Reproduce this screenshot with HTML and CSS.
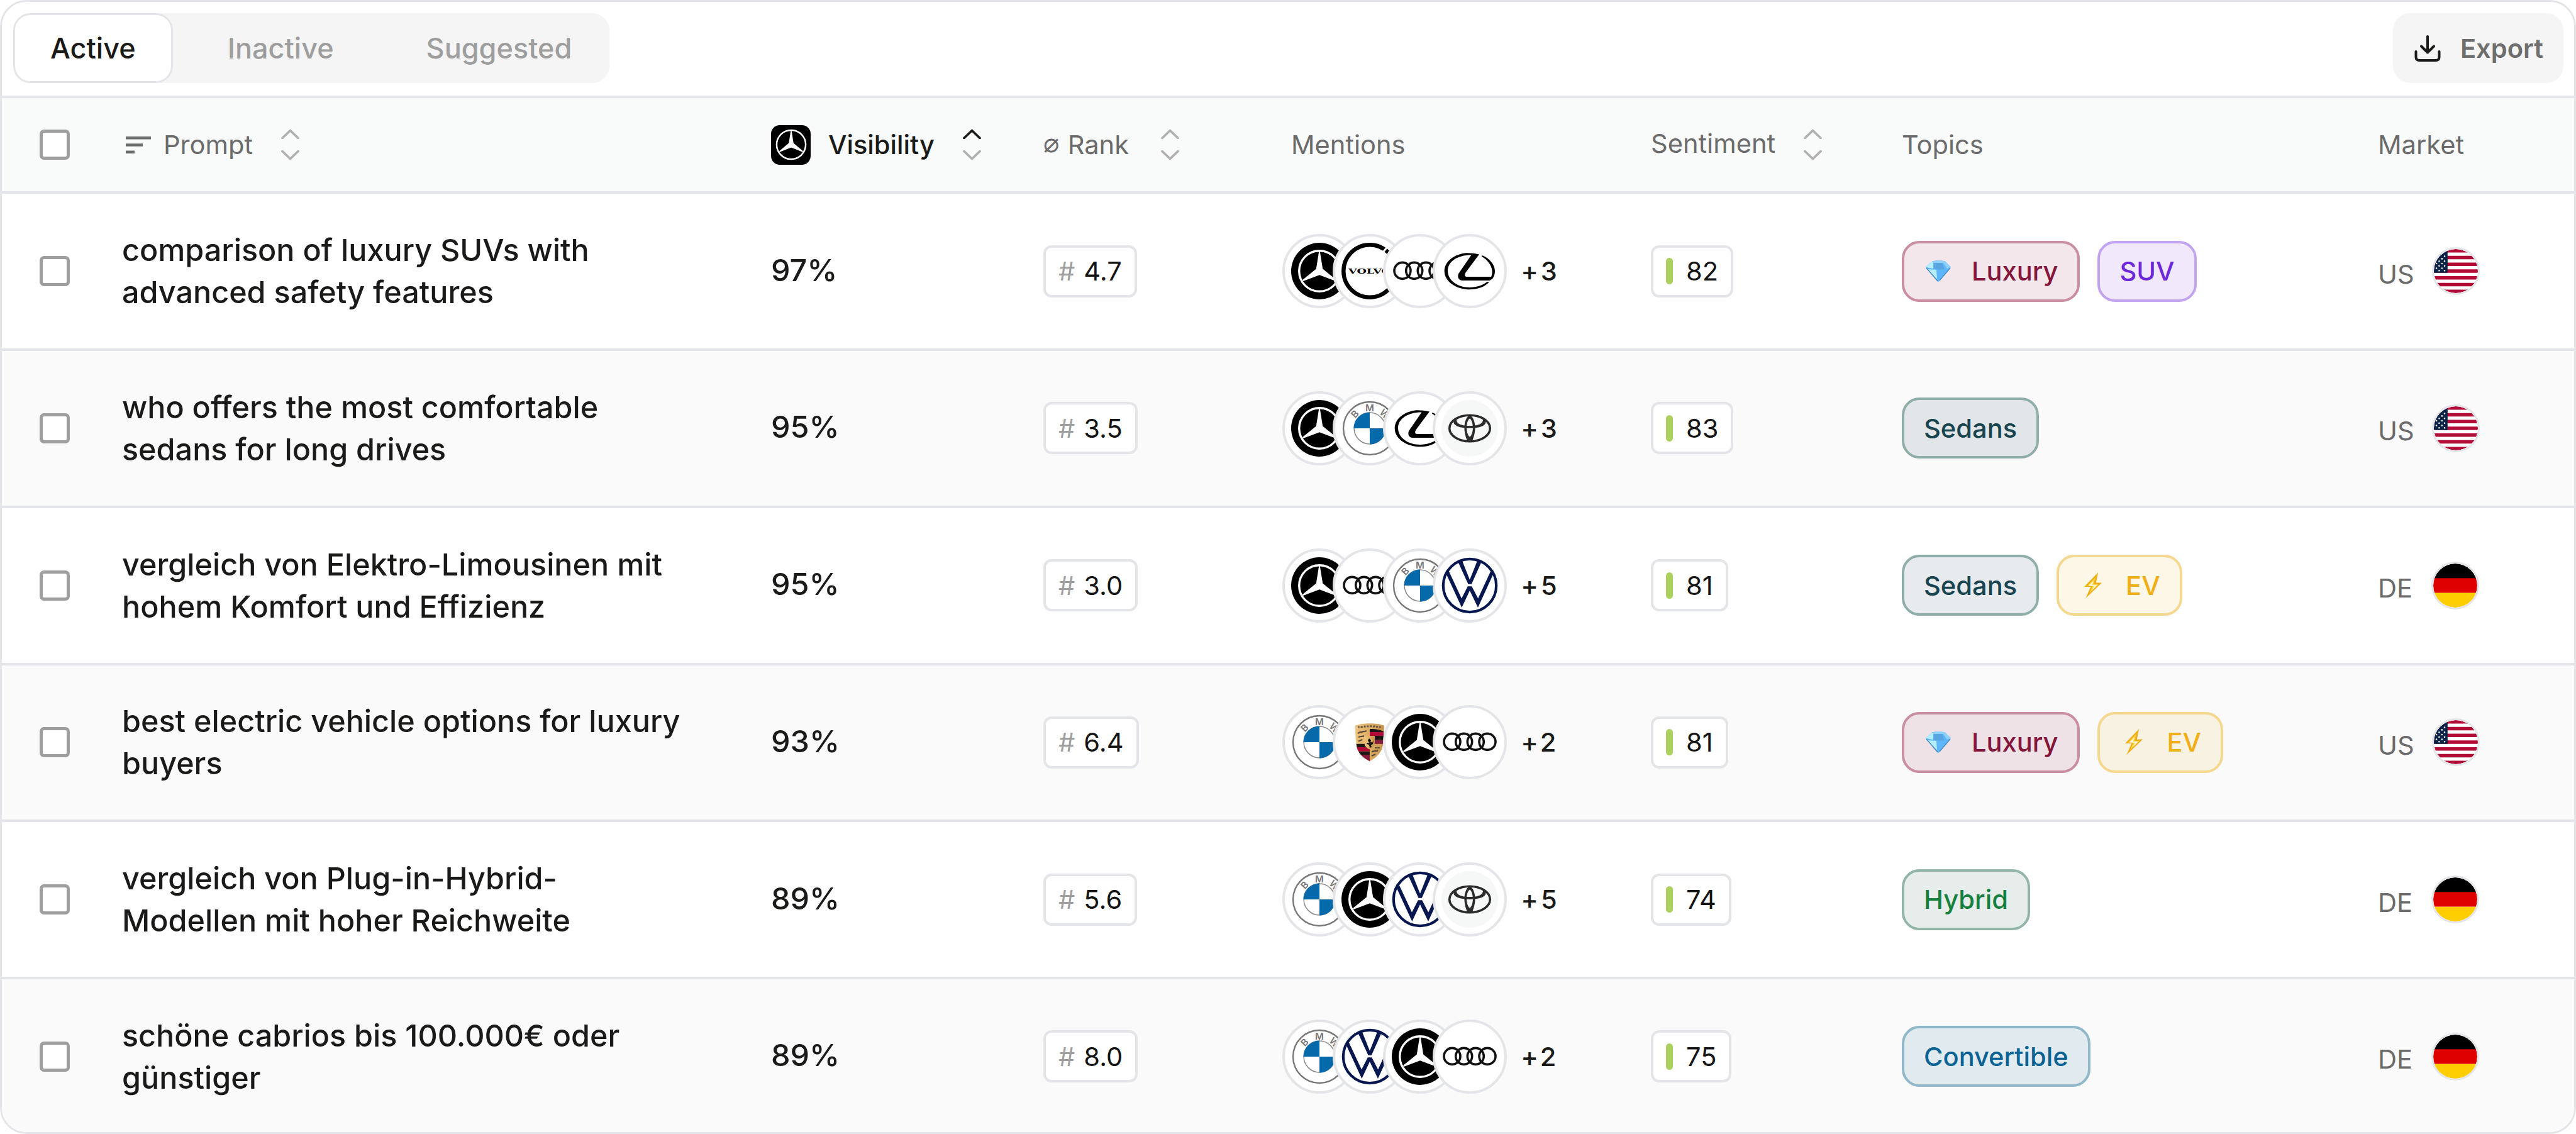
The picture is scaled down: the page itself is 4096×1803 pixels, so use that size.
FILE: index.html
```html
<!DOCTYPE html>
<html lang="en">
<head>
    <meta charset="UTF-8">
    <meta name="viewport" content="width=device-width, initial-scale=1.0">
    <title>Prompts</title>
    <link rel="stylesheet" href="styles.css">
</head>
<body>
    <!-- shared icons and brand logos -->
    <svg class="sprite" aria-hidden="true">
        <defs>
            <clipPath id="flag-clip"><circle r="35"/></clipPath>
            <clipPath id="shield"><path d="M-23-26.500C-12-31 12-31 22.700-26.500C22.700-10 22 4 19 11.500C15 20 8 26 0 30.300C-9 26-16 20-19.500 11.500C-22 4-23-10-23-26.500Z"/></clipPath>
            <linearGradient id="gold" x1="0" x2="1">
                <stop offset="0" stop-color="#f0c57c"/>
                <stop offset="1" stop-color="#c6934c"/>
            </linearGradient>
        </defs>

        <symbol id="sort-up" viewBox="0 0 29 16"><path d="M2 14.500L14.500 2.500L27 14.500"/></symbol>
        <symbol id="sort-down" viewBox="0 0 29 16"><path d="M2 1.500L14.500 13.500L27 1.500"/></symbol>

        <symbol id="star" viewBox="-45 -45 90 90">
            <circle r="33.500" fill="none" stroke="#fff" stroke-width="3.600"/>
            <path fill="#fff" d="M-1-32H1L5.400-3.800L27.500 15L26.500 17L0 6.500L-26.500 17L-27.500 15L-5.400-3.800Z"/>
        </symbol>

        <symbol id="mercedes" viewBox="-45 -45 90 90">
            <circle r="45"/>
            <circle r="32.300" fill="none" stroke="#fff" stroke-width="3.400"/>
            <path fill="#fff" d="M-.8-31H.8L5.200-3.600L26.800 14L26 16L0 6.300L-26 16L-26.800 14L-5.200-3.600Z"/>
        </symbol>

        <symbol id="volvo" viewBox="-45 -45 90 90">
            <circle r="41.700" fill="none" stroke="#000" stroke-width="6.400"/>
            <path d="M22-31L29-40" stroke="#fff" stroke-width="3"/>
            <text class="volvo-text" x="-34" y="4" textLength="68" lengthAdjust="spacingAndGlyphs">VOLVO</text>
        </symbol>

        <symbol id="audi" viewBox="-45 -45 90 90">
            <g fill="none" stroke="#111" stroke-width="3.600">
                <circle cx="-28" cy="-.6" r="13"/>
                <circle cx="-9.300" cy="-.6" r="13"/>
                <circle cx="9.300" cy="-.6" r="13"/>
                <circle cx="28" cy="-.6" r="13"/>
            </g>
        </symbol>

        <symbol id="lexus" viewBox="-45 -45 90 90">
            <path d="M14.900-26.500C8-28.500-2-29-8-28.600C-27-26-40.300-14-40.300 0C-40.300 17-21 29.300 0 29.300C12 29.300 24 25.500 31 17.300L27.500 17.300C21 22.500 11 26 0 26C-19 26-35 15-35-.5C-35-15-20-25.700 2.500-25.600L-17.800 3.900C-20 9 -18 15-11.400 15L32 15C34.500 13 37 11.500 37.500 9.100L-5 9.100C-8.500 8.500-8.500 5.500-6.300 1.900Z"/>
            <path d="M19.700-25C32-20 40-10 40 0C40 5 38.500 10 35 13.500L32.500 12C35 8 36 4 35.500-1C34.500-10 28-18 18.700-23.500Z"/>
        </symbol>

        <symbol id="toyota" viewBox="-45 -45 90 90">
            <circle r="45" fill="#f6f8f7"/>
            <ellipse rx="32.300" ry="20.800" fill="none" stroke="#2b2b2b" stroke-width="3.600"/>
            <path fill="#2b2b2b" d="M-23-16C-29-10-26-.2 0-.2C26-.2 29-10 23-16L19.500-18C24-10 18-4 0-4C-18-4-24-10-19.500-18Z"/>
            <path fill="#2b2b2b" fill-rule="evenodd" d="M0-20.500C-6-19-8.600-8-8.600-1C-8.600 8-5 19-3 21H3C5 19 8.600 8 8.600-1C8.600-8 6-19 0-20.500ZM0-15.500C3-14 5-7 5-1C5 5 3 12 0 13.500C-3 12-5 5-5-1C-5-7-3-14 0-15.500Z"/>
        </symbol>

        <symbol id="bmw" viewBox="-45 -45 90 90">
            <circle r="42" fill="#fff" stroke="#777" stroke-width="2.400"/>
            <circle r="24.900" fill="#fff" stroke="#8a8a8a" stroke-width="1.500"/>
            <path fill="#0669a9" d="M0 0V-25.500A25.500 25.500 0 0 0-25.500 0ZM0 0V25.500A25.500 25.500 0 0 0 25.500 0Z"/>
            <g class="bmw-text">
                <text transform="rotate(-46)" y="-27.500">B</text>
                <text y="-27.500">M</text>
                <text transform="rotate(46)" y="-27.500">W</text>
            </g>
        </symbol>

        <symbol id="vw" viewBox="-45 -45 90 90">
            <circle r="42.200" fill="#fff" stroke="#06164f" stroke-width="4.200"/>
            <path fill="#06164f" d="M-19-38.500L-2.500-2.300H2.800L19-38.500L12.700-41L0-9.300L-12.700-41ZM-38.500-20.800L-12.700 35L0 8.100L13 35L38.500-20.800L34-24.500L13.200 20.600L3.200 1.300H-3.200L-13 20.600L-34-24.500Z"/>
        </symbol>

        <symbol id="porsche" viewBox="-45 -45 90 90">
            <g clip-path="url(#shield)">
                <rect x="-24" y="-31" width="48" height="62" fill="url(#gold)"/>
                <path fill="#1c1815" d="M0-21C8-21.500 16-20 22-17V-15H0ZM0-10H22V-3.500H0ZM-22 2.700H0V8H-22ZM-22 14.500H0V20H-22Z"/>
                <path fill="#ae0a35" d="M0-16H22V-10H0ZM-22 8H0V14.500H-22Z"/>
                <path fill="#85183b" d="M0-3.500H22V2.700H0ZM-22 20H0V31H-22Z"/>
                <path fill="none" stroke="#5b4a3a" stroke-width="2.200" d="M-19-14C-15-17-10-16-5-18M-18-8C-14-10-11-8.500-9-10M-18-1.500L-12-4M3 16C7 12 9 16 13 13M8 9H16M3 22L9 19"/>
                <path fill="none" stroke="#6b5a45" stroke-width="3" stroke-dasharray="3 1.800" d="M-19-23.500C-9-25.500 8-26 19-23.500"/>
                <path fill="url(#gold)" d="M-8.500-10H8V1C8 6 4 10 0 11.500C-5 10-8.500 6-8.500 1Z"/>
                <path fill="#1c1815" d="M-1-6L2-3L1-1L4 1L6-4L5 3L2 5L3 8L0 9L-1 4L-5 3L-4 1L-1 1L-3-3Z"/>
            </g>
        </symbol>

        <symbol id="gem" viewBox="0 0 40 35">
            <path fill="#5fb6fa" d="M10 1.500C16-.3 25-.3 31 1.500L40 10.600L20 34.500L0 10.600Z"/>
            <path fill="#b5efff" d="M10 1.500L12 3V13L6 12L0 10.600ZM3 14L17 15L18 30Z"/>
            <path fill="#8fd0fb" d="M10 1.500C16-.3 25-.3 31 1.500L28 4H12ZM31 1.500L40 10.600L34 13L28 4Z"/>
            <path fill="#5497cd" d="M13 4H26L30 14L22 15L13 13Z" opacity=".55"/>
            <path fill="none" stroke="#3f86c4" d="M1 12L19 33M39 12L22 32" stroke-width="1.200"/>
        </symbol>

        <symbol id="bolt" viewBox="0 0 29 42">
            <path fill="#f0ae17" d="M22.200 0L18.800 16.600H28.100L2.300 41.200L10.300 23H0Z"/>
            <path fill="#ffd84a" d="M18 8L14.500 19H23L8 33L13.500 21.500H5Z"/>
            <path fill="#fffbe6" d="M15 13.500L12.500 20H20.500L13 28L16 21.500H7Z"/>
        </symbol>

        <symbol id="flag-us" viewBox="-35 -35 70 70">
            <g clip-path="url(#flag-clip)">
                <rect x="-35" y="-35" width="70" height="70" fill="#fff"/>
                <path stroke="#b20d36" stroke-width="5.380" d="M-35-32.300H35M-35-21.540H35M-35-10.770H35M-35 0H35M-35 10.770H35M-35 21.540H35M-35 32.300H35"/>
                <rect x="-35" y="-35" width="21.800" height="37.700" fill="#0b2347"/>
                <path stroke="#fff" stroke-width="2.600" stroke-linecap="round" d="M-18-23.500h.01M-22.200-19.600h.01M-18-15.800h.01M-26.600-15.800h.01M-22.200-12h.01M-30.900-12h.01M-18-8.200h.01M-26.600-8.200h.01M-22.200-4.500h.01M-30.900-4.500h.01M-18-.8h.01M-26.600-.8h.01"/>
            </g>
        </symbol>

        <symbol id="flag-de" viewBox="-35 -35 70 70">
            <g clip-path="url(#flag-clip)">
                <rect x="-35" y="-35" width="70" height="24" fill="#000"/>
                <rect x="-35" y="-11.700" width="70" height="23.400" fill="#df0000"/>
                <rect x="-35" y="11.700" width="70" height="24" fill="#ffce00"/>
            </g>
        </symbol>
    </svg>

    <div class="panel">
        <div class="toolbar">
            <div class="tabs">
                <div class="tab active">Active</div>
                <div class="tab">Inactive</div>
                <div class="tab">Suggested</div>
            </div>
            <button class="export">
                <svg class="export-icon" viewBox="0 0 42 42"><path d="M21 2V27M11 17.500L21 27.500L31 17.500M2.500 26V34.500Q2.500 40 8 40H34Q39.500 40 39.500 34.500V26"/></svg>
                <span>Export</span>
            </button>
        </div>

        <div class="row head">
            <div class="check"><span class="box"></span></div>
            <div class="cell">
                <svg class="filter-icon" viewBox="0 0 40 27"><path d="M0 2.300H40M0 13.500H27M0 24.700H14"/></svg>
                <span>Prompt</span>
                <span class="sort"><svg><use href="#sort-up"/></svg><svg><use href="#sort-down"/></svg></span>
            </div>
            <div class="cell visibility-head">
                <span class="brand"><svg><use href="#star"/></svg></span>
                <span>Visibility</span>
                <span class="sort asc"><svg><use href="#sort-up"/></svg><svg><use href="#sort-down"/></svg></span>
            </div>
            <div class="cell rank-head">
                <span><span class="avg">⌀</span> Rank</span>
                <span class="sort"><svg><use href="#sort-up"/></svg><svg><use href="#sort-down"/></svg></span>
            </div>
            <div class="cell mentions-head">Mentions</div>
            <div class="cell sentiment-head">
                <span class="raised">Sentiment</span>
                <span class="sort"><svg><use href="#sort-up"/></svg><svg><use href="#sort-down"/></svg></span>
            </div>
            <div class="cell">Topics</div>
            <div class="cell">Market</div>
        </div>

        <div class="row">
            <div class="check"><span class="box"></span></div>
            <div class="prompt">comparison of luxury SUVs with advanced safety features</div>
            <div class="visibility">97%</div>
            <div class="cell"><span class="chip"><i>#</i>4.7</span></div>
            <div class="mentions">
                <span class="logo"><svg><use href="#mercedes"/></svg></span>
                <span class="logo"><svg><use href="#volvo"/></svg></span>
                <span class="logo"><svg><use href="#audi"/></svg></span>
                <span class="logo"><svg><use href="#lexus"/></svg></span>
                <span class="more">+3</span>
            </div>
            <div class="cell"><span class="chip score"><b></b>82</span></div>
            <div class="topics">
                <span class="tag luxury"><svg class="gem"><use href="#gem"/></svg>Luxury</span>
                <span class="tag suv">SUV</span>
            </div>
            <div class="market"><span>US</span><svg class="flag"><use href="#flag-us"/></svg></div>
        </div>

        <div class="row alt">
            <div class="check"><span class="box"></span></div>
            <div class="prompt">who offers the most comfortable sedans for long drives</div>
            <div class="visibility">95%</div>
            <div class="cell"><span class="chip"><i>#</i>3.5</span></div>
            <div class="mentions">
                <span class="logo"><svg><use href="#mercedes"/></svg></span>
                <span class="logo"><svg><use href="#bmw"/></svg></span>
                <span class="logo"><svg><use href="#lexus"/></svg></span>
                <span class="logo"><svg><use href="#toyota"/></svg></span>
                <span class="more">+3</span>
            </div>
            <div class="cell"><span class="chip score"><b></b>83</span></div>
            <div class="topics">
                <span class="tag sedans">Sedans</span>
            </div>
            <div class="market"><span>US</span><svg class="flag"><use href="#flag-us"/></svg></div>
        </div>

        <div class="row">
            <div class="check"><span class="box"></span></div>
            <div class="prompt">vergleich von Elektro-Limousinen mit hohem Komfort und Effizienz</div>
            <div class="visibility">95%</div>
            <div class="cell"><span class="chip"><i>#</i>3.0</span></div>
            <div class="mentions">
                <span class="logo"><svg><use href="#mercedes"/></svg></span>
                <span class="logo"><svg><use href="#audi"/></svg></span>
                <span class="logo"><svg><use href="#bmw"/></svg></span>
                <span class="logo"><svg><use href="#vw"/></svg></span>
                <span class="more">+5</span>
            </div>
            <div class="cell"><span class="chip score"><b></b>81</span></div>
            <div class="topics">
                <span class="tag sedans">Sedans</span>
                <span class="tag ev"><svg class="bolt"><use href="#bolt"/></svg>EV</span>
            </div>
            <div class="market"><span>DE</span><svg class="flag"><use href="#flag-de"/></svg></div>
        </div>

        <div class="row alt">
            <div class="check"><span class="box"></span></div>
            <div class="prompt">best electric vehicle options for luxury buyers</div>
            <div class="visibility">93%</div>
            <div class="cell"><span class="chip"><i>#</i>6.4</span></div>
            <div class="mentions">
                <span class="logo"><svg><use href="#bmw"/></svg></span>
                <span class="logo"><svg><use href="#porsche"/></svg></span>
                <span class="logo"><svg><use href="#mercedes"/></svg></span>
                <span class="logo"><svg><use href="#audi"/></svg></span>
                <span class="more">+2</span>
            </div>
            <div class="cell"><span class="chip score"><b></b>81</span></div>
            <div class="topics">
                <span class="tag luxury"><svg class="gem"><use href="#gem"/></svg>Luxury</span>
                <span class="tag ev"><svg class="bolt"><use href="#bolt"/></svg>EV</span>
            </div>
            <div class="market"><span>US</span><svg class="flag"><use href="#flag-us"/></svg></div>
        </div>

        <div class="row">
            <div class="check"><span class="box"></span></div>
            <div class="prompt">vergleich von Plug-in-Hybrid-Modellen mit hoher Reichweite</div>
            <div class="visibility">89%</div>
            <div class="cell"><span class="chip"><i>#</i>5.6</span></div>
            <div class="mentions">
                <span class="logo"><svg><use href="#bmw"/></svg></span>
                <span class="logo"><svg><use href="#mercedes"/></svg></span>
                <span class="logo"><svg><use href="#vw"/></svg></span>
                <span class="logo"><svg><use href="#toyota"/></svg></span>
                <span class="more">+5</span>
            </div>
            <div class="cell"><span class="chip score"><b></b>74</span></div>
            <div class="topics">
                <span class="tag hybrid">Hybrid</span>
            </div>
            <div class="market"><span>DE</span><svg class="flag"><use href="#flag-de"/></svg></div>
        </div>

        <div class="row alt">
            <div class="check"><span class="box"></span></div>
            <div class="prompt">schöne cabrios bis 100.000€ oder günstiger</div>
            <div class="visibility">89%</div>
            <div class="cell"><span class="chip"><i>#</i>8.0</span></div>
            <div class="mentions">
                <span class="logo"><svg><use href="#bmw"/></svg></span>
                <span class="logo"><svg><use href="#vw"/></svg></span>
                <span class="logo"><svg><use href="#mercedes"/></svg></span>
                <span class="logo"><svg><use href="#audi"/></svg></span>
                <span class="more">+2</span>
            </div>
            <div class="cell"><span class="chip score"><b></b>75</span></div>
            <div class="topics">
                <span class="tag convertible">Convertible</span>
            </div>
            <div class="market"><span>DE</span><svg class="flag"><use href="#flag-de"/></svg></div>
        </div>
    </div>
</body>
</html>
```
FILE: styles.css
```css
* {
    box-sizing: border-box;
}
body {
    margin: 0;
    background-color: white;
    font-family: Inter, sans-serif;
    font-size: 41.6px;
    color: #1a1a18;
}
.sprite {
    position: absolute;
    width: 0;
    height: 0;
}
.panel {
    width: 4096px;
    height: 1803px;
    border: 3px solid #e4e5e9;
    border-radius: 42px;
    overflow: hidden;
    background-color: white;
}

/* toolbar */
.toolbar {
    display: flex;
    justify-content: space-between;
    align-items: center;
    height: 153px;
    padding: 0 17px 2px 18px;
    border-bottom: 4px solid #e4e5e9;
}
.tabs {
    display: flex;
    height: 111px;
    border-radius: 27px;
    background-color: #f5f5f5;
}
.tab {
    display: flex;
    align-items: center;
    padding: 0 60px 0 87px;
    border-radius: 27px;
    font-size: 45px;
    font-weight: 500;
    color: #9e9e9e;
}
.tab.active {
    padding: 0 56px;
    border: 3px solid #e4e5e9;
    background-color: white;
    color: #1a1a18;
}
.export {
    display: flex;
    align-items: center;
    gap: 31px;
    height: 111px;
    padding: 0 32px 0 34px;
    border: none;
    border-radius: 27px;
    background-color: #f5f5f5;
    font-family: inherit;
    font-size: 41.6px;
    font-weight: 600;
    color: #6e6e6e;
}
.export-icon {
    width: 42px;
    height: 42px;
    fill: none;
    stroke: #1a1a18;
    stroke-width: 4;
    stroke-linecap: round;
    stroke-linejoin: round;
}

/* table rows */
.row {
    display: grid;
    grid-template-columns: 191px 1032px 433px 380px 586px 399px 757px 1fr;
    align-items: center;
    height: 249.71px;
    border-bottom: 4px solid #e4e5e9;
}
.row.alt {
    background-color: #fafafa;
}
.row.head {
    height: 152.4px;
    background-color: #f9fafa;
    color: #6b6b6b;
}
.cell {
    display: flex;
    align-items: center;
}
.check {
    padding-left: 60px;
}
.box {
    display: block;
    width: 48px;
    height: 48px;
    border: 5px solid #9e9e9e;
    border-radius: 7px;
    background-color: white;
}

/* column heads */
.filter-icon {
    width: 40px;
    height: 27px;
    margin: 0 20px 0 6px;
    stroke: #6b6b6b;
    stroke-width: 4.5;
}
.sort {
    display: flex;
    flex-direction: column;
    gap: 18px;
    margin-left: 45px;
}
.sort svg {
    display: block;
    width: 29px;
    height: 16px;
    fill: none;
    stroke: #b0b0b0;
    stroke-width: 3.8;
    stroke-linecap: round;
    stroke-linejoin: round;
}
.sort.asc svg:first-child {
    stroke: #1a1a18;
}
.brand {
    display: flex;
    align-items: center;
    justify-content: center;
    width: 63px;
    height: 63px;
    margin-right: 28px;
    border-radius: 14px;
    background-color: black;
}
.brand svg {
    width: 62px;
    height: 62px;
}
.visibility-head {
    font-weight: 500;
    color: #1a1a18;
}
.avg {
    margin-right: 2px;
    vertical-align: 3px;
    line-height: 1;
}
.rank-head .sort {
    margin-left: 51px;
}
.mentions-head {
    padding-left: 14px;
}
.raised {
    margin-bottom: 5px;
}

/* cells */
.prompt {
    width: 895px;
    font-size: 48.5px;
    line-height: 67px;
    font-weight: 500;
}
.visibility {
    margin-bottom: 4px;
    font-size: 48.5px;
    font-weight: 500;
}
.chip {
    display: flex;
    align-items: center;
    height: 83px;
    padding: 0 20px;
    border: 4px solid #e4e5e9;
    border-radius: 13px;
    background-color: white;
    color: #141414;
}
.chip i {
    margin-right: 14px;
    font-style: normal;
    color: #9e9e9e;
}
.chip b {
    width: 11px;
    height: 42px;
    margin-right: 21px;
    border-radius: 6px;
    background-color: #acd15d;
}
.mentions {
    display: flex;
    align-items: center;
}
.logo {
    display: flex;
    align-items: center;
    justify-content: center;
    flex: none;
    width: 118px;
    height: 118px;
    margin-right: -38.2px;
    border: 4px solid #e4e5e9;
    border-radius: 50%;
    background-color: white;
}
.logo svg {
    width: 90px;
    height: 90px;
}
.volvo-text {
    font-family: "DejaVu Serif", serif;
    font-size: 11.4px;
    font-weight: 700;
}
.bmw-text {
    font-family: Inter, sans-serif;
    font-size: 15px;
    font-weight: 600;
    fill: #777;
    text-anchor: middle;
}
.more {
    margin-left: 60px;
    font-weight: 500;
    letter-spacing: 4px;
}

/* topics */
.topics {
    display: flex;
    gap: 28px;
}
.tag {
    display: flex;
    align-items: center;
    height: 97px;
    padding: 0 31px;
    border: 4px solid;
    border-radius: 28px;
    font-weight: 500;
}
.luxury {
    color: #85163b;
    background-color: rgba(133, 22, 59, 0.1);
    border-color: #c98ea2;
}
.suv {
    color: #6d28d9;
    background-color: #f1e9fb;
    border-color: #c2a3f0;
}
.sedans {
    color: #17444f;
    background-color: rgba(30, 60, 80, 0.1);
    border-color: #8fada9;
}
.ev {
    color: #f0ae17;
    background-color: rgba(240, 174, 23, 0.1);
    border-color: #f5d78f;
}
.hybrid {
    color: #15803d;
    background-color: rgba(23, 78, 59, 0.1);
    border-color: #93b5a7;
}
.convertible {
    color: #0b6394;
    background-color: rgba(11, 99, 148, 0.1);
    border-color: #90b8c8;
}
.gem {
    width: 40px;
    height: 35px;
    margin: 0 33px 0 3px;
}
.bolt {
    width: 29px;
    height: 42px;
    margin: 0 37px 0 9px;
}

/* market */
.market {
    display: flex;
    align-items: center;
    gap: 28px;
    color: #6b6b6b;
}
.market span {
    min-width: 57px;
    margin-top: 9px;
}
.flag {
    width: 76px;
    height: 76px;
    border: 3px solid #e4e5e9;
    border-radius: 50%;
}
```
